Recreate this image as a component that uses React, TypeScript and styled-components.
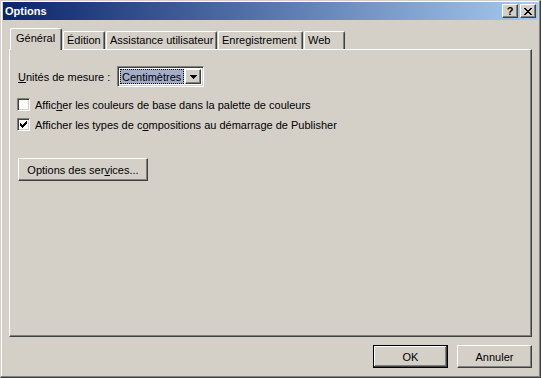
import React from "react";
import styled, { createGlobalStyle, css } from "styled-components";

const Global = createGlobalStyle`
  html, body { margin: 0; padding: 0; background: #d4d0c8; }
  body { font-family: "Liberation Sans", Arial, sans-serif; font-size: 11px; color: #000; }
  * { box-sizing: border-box; }
`;

const face = "#d4d0c8";

const Window = styled.div`
  width: 541px;
  height: 378px;
  display: flex;
  flex-direction: column;
  background: ${face};
  border: 1px solid;
  border-color: ${face} #404040 #404040 ${face};
  box-shadow: inset -1px -1px #808080, inset 1px 1px #fff;
  padding: 1px 2px 2px 2px;
`;

const TitleBar = styled.div`
  height: 18px;
  display: flex;
  align-items: center;
  justify-content: space-between;
  padding: 0 2px 0 2px;
  background: linear-gradient(to right, #0a246a, #a6caf0);
`;

const Title = styled.span`
  color: #fff;
  font-weight: bold;
  font-size: 11px;
  line-height: 18px;
`;

const TitleButtons = styled.div`
  display: flex;
  gap: 2px;
`;

const raised = css`
  border: 1px solid;
  border-color: #fff #404040 #404040 #fff;
  box-shadow: inset -1px -1px #808080, inset 1px 1px ${face};
  background: ${face};
`;

const CaptionButton = styled.div`
  ${raised};
  width: 16px;
  height: 14px;
  display: flex;
  align-items: center;
  justify-content: center;
  font-weight: bold;
  font-size: 11px;
  line-height: 12px;
  color: #000;
`;

const Body = styled.div`
  flex: 1;
  display: flex;
  flex-direction: column;
  padding: 8px 6px 7px 6px;
`;

const TabStrip = styled.div`
  height: 21px;
  display: flex;
  align-items: flex-end;
  gap: 1px;
  padding-left: 1px;
`;

const Tab = styled.div<{ $w: number; $active?: boolean }>`
  position: relative;
  width: ${(p) => p.$w}px;
  height: ${(p) => (p.$active ? 22 : 18)}px;
  margin-bottom: ${(p) => (p.$active ? -1 : 0)}px;
  z-index: ${(p) => (p.$active ? 1 : 0)};
  background: ${face};
  border-left: 1px solid #fff;
  border-top: 1px solid #fff;
  border-right: 1px solid #404040;
  border-radius: 2px 2px 0 0;
  box-shadow: inset -1px 0 #808080;
  display: flex;
  align-items: ${(p) => (p.$active ? "flex-start" : "center")};
  padding-top: ${(p) => (p.$active ? 3 : 0)}px;
  padding-left: ${(p) => (p.$active ? 5 : 3)}px;
  white-space: nowrap;
  line-height: 13px;
`;

const Panel = styled.div`
  flex: 1;
  display: flex;
  flex-direction: column;
  align-items: flex-start;
  border: 1px solid;
  border-color: #fff #404040 #404040 #fff;
  box-shadow: inset -1px -1px #808080;
  padding: 16px 8px;
`;

const FieldRow = styled.div`
  display: flex;
  align-items: center;
  height: 21px;
`;

const Label = styled.span`
  width: 99px;
`;

const Select = styled.div`
  width: 87px;
  height: 21px;
  display: flex;
  align-items: stretch;
  padding: 2px;
  background: #fff;
  border: 1px solid;
  border-color: #808080 #fff #fff #808080;
  box-shadow: inset 1px 1px #404040, inset -1px -1px ${face};
`;

const SelectValue = styled.div`
  flex: 1;
  margin: 0 1px 0 0;
  background: #a3adc9;
  outline: 1px dotted #000;
  outline-offset: -1px;
  display: flex;
  align-items: center;
  padding-left: 2px;
  color: #000;
`;

const ArrowButton = styled.div`
  ${raised};
  width: 16px;
  display: flex;
  align-items: center;
  justify-content: center;
`;

const CheckList = styled.div`
  display: flex;
  flex-direction: column;
  margin-top: 7px;
`;

const CheckRow = styled.div`
  height: 20px;
  display: flex;
  align-items: center;
  gap: 5px;
  margin-left: -1px;
  padding-top: 1px;
`;

const Box = styled.div`
  width: 13px;
  height: 13px;
  background: #fff;
  border: 1px solid;
  border-color: #808080 #fff #fff #808080;
  box-shadow: inset 1px 1px #404040, inset -1px -1px ${face};
  display: flex;
  align-items: center;
  justify-content: center;
`;

const Button = styled.div<{ $w: number; $default?: boolean }>`
  width: ${(p) => p.$w}px;
  height: 23px;
  display: flex;
  align-items: center;
  justify-content: center;
  background: ${face};
  border: 1px solid;
  ${(p) =>
    p.$default
      ? css`
          border-color: #000;
          box-shadow: inset -1px -1px #404040, inset 1px 1px #fff, inset -2px -2px #808080, inset 2px 2px ${face};
        `
      : css`
          border-color: #fff #404040 #404040 #fff;
          box-shadow: inset -1px -1px #808080, inset 1px 1px ${face};
        `}
`;

const ServicesButton = styled(Button)`
  margin-top: 24px;
`;

const Footer = styled.div`
  display: flex;
  justify-content: flex-end;
  gap: 9px;
  margin-top: 8px;
`;

const Check = () => (
  <svg width="7" height="7" viewBox="0 0 7 7" shapeRendering="crispEdges">
    <path
      d="M6 0h1v3h-1v1h-1v1h-1v1h-1v1h-1v-1h-1v-1h-1v-3h1v1h1v1h1v-1h1v-1h1z"
      fill="#000"
    />
  </svg>
);

const Arrow = () => (
  <svg width="7" height="4" viewBox="0 0 7 4" shapeRendering="crispEdges">
    <path d="M0 0h7v1h-1v1h-1v1h-1v1h-1v-1h-1v-1h-1v-1h-1z" fill="#000" />
  </svg>
);

const CloseGlyph = () => (
  <svg width="8" height="7" viewBox="0 0 8 7" shapeRendering="crispEdges">
    <path
      d="M0 0h2v1h1v1h2v-1h1v-1h2v1h-1v1h-1v1h-1v1h1v1h1v1h1v1h-2v-1h-1v-1h-2v1h-1v1h-2v-1h1v-1h1v-1h1v-1h-1v-1h-1v-1h-1z"
      fill="#000"
    />
  </svg>
);

export default function App() {
  return (
    <>
      <Global />
      <Window>
        <TitleBar>
          <Title>Options</Title>
          <TitleButtons>
            <CaptionButton>?</CaptionButton>
            <CaptionButton>
              <CloseGlyph />
            </CaptionButton>
          </TitleButtons>
        </TitleBar>
        <Body>
          <TabStrip>
            <Tab $w={52} $active>
              Général
            </Tab>
            <Tab $w={42}>Édition</Tab>
            <Tab $w={111}>Assistance utilisateur</Tab>
            <Tab $w={85}>Enregistrement</Tab>
            <Tab $w={41}>Web</Tab>
          </TabStrip>
          <Panel>
            <FieldRow>
              <Label>
                <u>U</u>nités de mesure :
              </Label>
              <Select>
                <SelectValue>Centimètres</SelectValue>
                <ArrowButton>
                  <Arrow />
                </ArrowButton>
              </Select>
            </FieldRow>
            <CheckList>
              <CheckRow>
                <Box />
                <span>
                  Affic<u>h</u>er les couleurs de base dans la palette de couleurs
                </span>
              </CheckRow>
              <CheckRow>
                <Box>
                  <Check />
                </Box>
                <span>
                  Afficher les types de c<u>o</u>mpositions au démarrage de Publisher
                </span>
              </CheckRow>
            </CheckList>
            <ServicesButton $w={130}>
              Options des ser<u>v</u>ices...
            </ServicesButton>
          </Panel>
          <Footer>
            <Button $w={75} $default>
              OK
            </Button>
            <Button $w={75}>Annuler</Button>
          </Footer>
        </Body>
      </Window>
    </>
  );
}
